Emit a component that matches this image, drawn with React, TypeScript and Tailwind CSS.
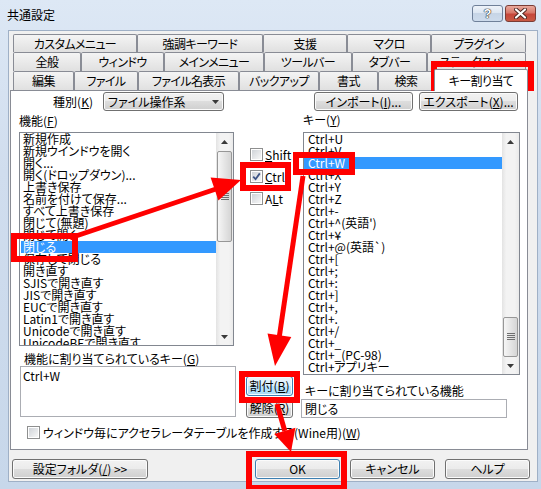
import React from "react";

const funcs = [
  "新規作成",
  "新規ウインドウを開く",
  "開く...",
  "開く(ドロップダウン)...",
  "上書き保存",
  "名前を付けて保存...",
  "すべて上書き保存",
  "閉じて(無題)",
  "閉じて開く",
  "閉じる",
  "保存して閉じる",
  "開き直す",
  "SJISで開き直す",
  "JISで開き直す",
  "EUCで開き直す",
  "Latin1で開き直す",
  "Unicodeで開き直す",
  "UnicodeBEで開き直す",
];

const keys = [
  "Ctrl+U",
  "Ctrl+V",
  "Ctrl+W",
  "Ctrl+X",
  "Ctrl+Y",
  "Ctrl+Z",
  "Ctrl+-",
  "Ctrl+^(英語')",
  "Ctrl+¥",
  "Ctrl+@(英語`)",
  "Ctrl+[",
  "Ctrl+;",
  "Ctrl+:",
  "Ctrl+]",
  "Ctrl+,",
  "Ctrl+.",
  "Ctrl+/",
  "Ctrl+_",
  "Ctrl+_(PC-98)",
  "Ctrl+アプリキー",
];

const BTN =
  "flex items-center justify-center rounded-[3px] border border-[#707070] bg-[linear-gradient(#f2f2f2_0%,#ebebeb_50%,#dddddd_50%,#cfcfcf_100%)] shadow-[inset_0_0_0_1px_#fbfbfb]";
const BTN_HOT =
  "flex items-center justify-center rounded-[3px] border border-[#3c7fb1] bg-[linear-gradient(#eaf6fd_0%,#d9f0fc_50%,#bee6fd_50%,#a7d9f5_100%)] shadow-[inset_0_0_0_1px_#f4fbff]";
const TAB =
  "h-[19px] flex items-center justify-center border border-b-0 border-[#898c95] rounded-t-[2px] bg-[linear-gradient(#f4f4f4,#e0e0e0)] whitespace-nowrap tracking-[-0.6px]";
const TAB1 =
  "h-[18px] flex items-center justify-center border border-b-0 border-[#898c95] rounded-t-[2px] bg-[linear-gradient(#f4f4f4,#e0e0e0)] whitespace-nowrap tracking-[-0.6px]";

function Tri({ down }: { down?: boolean }) {
  return (
    <svg width="7" height="4" viewBox="0 0 7 4">
      <path d={down ? "M0 0H7L3.5 4Z" : "M0 4H7L3.5 0Z"} fill="#3a3a3a" />
    </svg>
  );
}

function Grip() {
  return (
    <svg width="8" height="8" viewBox="0 0 8 8">
      <rect x="0" y="0" width="8" height="1" fill="#6f6f6f" />
      <rect x="0" y="2" width="8" height="1" fill="#6f6f6f" />
      <rect x="0" y="4" width="8" height="1" fill="#6f6f6f" />
      <rect x="0" y="6" width="8" height="1" fill="#6f6f6f" />
    </svg>
  );
}

function VScroll({ gapCls, thumbCls }: { gapCls: string; thumbCls: string }) {
  return (
    <div className="w-[17px] h-full flex flex-col shrink-0 bg-[linear-gradient(90deg,#e3e3e3,#f3f3f3_25%,#f3f3f3_75%,#eaeaea)]">
      <div className="h-[17px] flex items-center justify-center">
        <Tri />
      </div>
      <div className={gapCls} />
      <div
        className={
          "mx-[1px] rounded-[2px] border border-[#979797] bg-[linear-gradient(90deg,#f6f6f6,#e7e7e7_45%,#d5d5d5)] flex items-center justify-center " +
          thumbCls
        }
      >
        <Grip />
      </div>
      <div className="flex-1" />
      <div className="h-[17px] flex items-center justify-center">
        <Tri down />
      </div>
    </div>
  );
}

function Check({ checked }: { checked?: boolean }) {
  return (
    <div className="w-[13px] h-[13px] shrink-0 border border-[#8e8f8f] bg-white p-[1px]">
      <div className="w-full h-full bg-[linear-gradient(135deg,#cfd3d8,#f7f7f7)] flex items-center justify-center">
        {checked && (
          <svg width="9" height="9" viewBox="0 0 9 9">
            <path d="M1.2 4.6 L3.6 7.2 L7.8 1.4" stroke="#3d5485" strokeWidth="1.8" fill="none" />
          </svg>
        )}
      </div>
    </div>
  );
}

function Tabs() {
  return (
    <div className="ml-[4px] mt-[3px] flex flex-col">
      <div className="flex h-[18px]">
        <div className={TAB1 + " w-[124px]"}>カスタムメニュー</div>
        <div className={TAB1 + " w-[126px]"}>強調キーワード</div>
        <div className={TAB1 + " w-[84px]"}>支援</div>
        <div className={TAB1 + " w-[84px]"}>マクロ</div>
        <div className={TAB1 + " w-[95px]"}>プラグイン</div>
      </div>
      <div className="flex h-[19px]">
        <div className={TAB + " w-[68px]"}>全般</div>
        <div className={TAB + " w-[83px]"}>ウィンドウ</div>
        <div className={TAB + " w-[100px]"}>メインメニュー</div>
        <div className={TAB + " w-[88px]"}>ツールバー</div>
        <div className={TAB + " w-[75px]"}>タブバー</div>
        <div className={TAB + " w-[99px]"}>ステータスバー</div>
      </div>
      <div className="flex h-[19px] items-start">
        <div className={TAB + " w-[61px]"}>編集</div>
        <div className={TAB + " w-[64px]"}>ファイル</div>
        <div className={TAB + " w-[101px]"}>ファイル名表示</div>
        <div className={TAB + " w-[80px]"}>バックアップ</div>
        <div className={TAB + " w-[59px]"}>書式</div>
        <div className={TAB + " w-[56px]"}>検索</div>
        <div className="relative z-10 -mt-[2px] h-[22px] w-[94px] flex items-center justify-center border border-b-0 border-[#898c95] rounded-t-[2px] bg-white whitespace-nowrap tracking-[-0.6px]">
          キー割り当て
        </div>
      </div>
    </div>
  );
}

function Panel() {
  return (
    <div className="ml-[1px] w-[518px] h-[360px] border border-[#898c95] bg-white flex flex-col">
      {/* row A */}
      <div className="mt-[1px] h-[19px] flex items-center">
        <div className="w-[82px] text-right">
          種別(<u>K</u>)
        </div>
        <div className={BTN + " ml-[10px] w-[121px] h-[19px] !justify-between pl-[4px] pr-[4px]"}>
          <span>ファイル操作系</span>
          <Tri down />
        </div>
        <div className={BTN + " ml-[90px] w-[99px] h-[19px]"}>
          インポート(<u>I</u>)...
        </div>
        <div className={BTN + " ml-[6px] w-[99px] h-[19px]"}>
          エクスポート(<u>X</u>)...
        </div>
      </div>

      {/* columns */}
      <div className="flex">
        {/* left */}
        <div className="ml-[8px] w-[217px] flex flex-col">
          <div className="mt-[4px] h-[12px]">
            機能(<u>F</u>)
          </div>
          <div className="mt-[5px] w-[215px] h-[214px] border border-[#828790] bg-white flex overflow-hidden">
            <div className="flex-1 pl-[1px] overflow-hidden">
              {funcs.map((t) => (
                <div
                  key={t}
                  className={
                    t === "閉じる"
                      ? "h-[12px] leading-[12px] pl-[2px] whitespace-nowrap bg-[#3399ff] text-white"
                      : "h-[12px] leading-[12px] pl-[2px] whitespace-nowrap"
                  }
                >
                  {t}
                </div>
              ))}
            </div>
            <VScroll gapCls="h-[1px]" thumbCls="h-[91px]" />
          </div>
          <div className="mt-[7px] ml-[5px] h-[12px] whitespace-nowrap">
            機能に割り当てられているキー(<u>G</u>)
          </div>
          <div className="mt-[1px] ml-[1px] w-[216px] h-[51px] border border-[#abadb3] bg-white pl-[2px] pt-[3px]">
            Ctrl+W
          </div>
        </div>

        {/* middle */}
        <div className="ml-[10px] w-[47px] flex flex-col">
          <div className="mt-[37px] pl-[4px] flex flex-col gap-[9px]">
            <div className="h-[13px] flex items-center gap-[2px]">
              <Check />
              <span>
                <u>S</u>hift
              </span>
            </div>
            <div className="h-[13px] flex items-center gap-[2px]">
              <Check checked />
              <span>
                <u>C</u>trl
              </span>
            </div>
            <div className="h-[13px] flex items-center gap-[2px]">
              <Check />
              <span>
                A<u>L</u>t
              </span>
            </div>
          </div>
          <div className={BTN_HOT + " mt-[171px] w-[47px] h-[20px]"}>
            割付(<u>B</u>)
          </div>
          <div className={BTN + " mt-[2px] w-[47px] h-[20px]"}>
            解除(<u>R</u>)
          </div>
        </div>

        {/* right */}
        <div className="ml-[10px] w-[217px] flex flex-col">
          <div className="mt-[3px] h-[12px]">
            キー(<u>Y</u>)
          </div>
          <div className="mt-[6px] w-[217px] h-[243px] border border-[#828790] bg-white flex overflow-hidden">
            <div className="flex-1 overflow-hidden">
              {keys.map((t) => (
                <div
                  key={t}
                  className={
                    t === "Ctrl+W"
                      ? "h-[12px] leading-[12px] pl-[4px] whitespace-nowrap bg-[#3399ff] text-white"
                      : "h-[12px] leading-[12px] pl-[4px] whitespace-nowrap"
                  }
                >
                  {t}
                </div>
              ))}
            </div>
            <VScroll gapCls="h-[167px]" thumbCls="h-[40px]" />
          </div>
          <div className="mt-[10px] ml-[2px] h-[12px] whitespace-nowrap">キーに割り当てられている機能</div>
          <div className="mt-[2px] -ml-[2px] w-[206px] h-[19px] border border-[#abadb3] bg-white pl-[3px] flex items-center">
            閉じる
          </div>
        </div>
      </div>

      <div className="mt-[8px] ml-[16px] h-[13px] flex items-center gap-[3px] whitespace-nowrap">
        <Check />
        <span>
          ウィンドウ毎にアクセラレータテーブルを作成する(Wine用)(<u>W</u>)
        </span>
      </div>
    </div>
  );
}

function BottomButtons() {
  return (
    <div className="mt-[9px] pl-[3px] flex">
      <div className={BTN + " w-[136px] h-[20px]"}>
        設定フォルダ(<u>/</u>) &gt;&gt;
      </div>
      <div className={BTN + " ml-[107px] w-[85px] h-[20px] !border-[#3c7fb1]"}>OK</div>
      <div className={BTN + " ml-[10px] w-[85px] h-[20px]"}>キャンセル</div>
      <div className={BTN + " ml-[10px] w-[85px] h-[20px]"}>ヘルプ</div>
    </div>
  );
}

export default function App() {
  return (
    <div className="relative w-[541px] h-[489px] overflow-hidden bg-[linear-gradient(180deg,#dde8f5_0%,#d0ddee_35%,#c7d7ea_100%)] text-[12px] leading-[12px] text-black font-['Noto_Sans_CJK_JP',sans-serif] [font-feature-settings:'palt']">
      {/* title bar */}
      <div className="h-[30px] flex items-start">
        <div className="pl-[7px] pt-[8px] leading-[13px] text-[12px]">共通設定</div>
        <div className="ml-auto mr-[5px] mt-[5px] flex gap-[2px]">
          <div className="w-[31px] h-[17px] rounded-[3px] border border-[#6f8099] bg-[linear-gradient(#eef3f9_0%,#dbe5f1_50%,#c7d5e6_50%,#cddbec_100%)] flex items-center justify-center">
            <span className="font-['Liberation_Sans',sans-serif] font-bold text-[13px] leading-[13px] text-white [text-shadow:0_0_1px_#222,0_0_1px_#222,0_0_1px_#222]">
              ?
            </span>
          </div>
          <div className="w-[31px] h-[17px] rounded-[3px] border border-[#7a3d36] bg-[linear-gradient(#e9a99c_0%,#d8786a_45%,#c6463a_55%,#c95a44_100%)] flex items-center justify-center">
            <svg width="13" height="11" viewBox="0 0 13 11">
              <path d="M2 1.5 L11 9.5 M11 1.5 L2 9.5" stroke="#4a2420" strokeWidth="4" strokeLinecap="round" />
              <path d="M2 1.5 L11 9.5 M11 1.5 L2 9.5" stroke="#ffffff" strokeWidth="2.2" strokeLinecap="round" />
            </svg>
          </div>
        </div>
      </div>

      {/* body */}
      <div className="ml-[8px] w-[530px] h-[452px] bg-[#f0f0f0] border border-[#9fb0c6] flex flex-col">
        <Tabs />
        <Panel />
        <BottomButtons />
      </div>

      {/* annotations */}
      <div className="absolute left-[431px] top-[61px] w-[103px] h-[30px] border-[6px] border-[#ff0000]" />
      <div className="absolute left-[11px] top-[233px] w-[67px] h-[29px] border-[6px] border-[#ff0000]" />
      <div className="absolute left-[240px] top-[162px] w-[51px] h-[29px] border-[6px] border-[#ff0000]" />
      <div className="absolute left-[293px] top-[152px] w-[62px] h-[23px] border-[6px] border-[#ff0000]" />
      <div className="absolute left-[239px] top-[371px] w-[61px] h-[32px] border-[6px] border-[#ff0000]" />
      <div className="absolute left-[246px] top-[451px] w-[101px] h-[40px] border-[6px] border-[#ff0000]" />
      <svg className="absolute left-0 top-0 pointer-events-none" width="541" height="489" viewBox="0 0 541 489">
        <line x1="70" y1="238" x2="216" y2="189" stroke="#ff0000" strokeWidth="5" />
        <polygon points="241,180 218.4,200.4 210.6,177.6" fill="#ff0000" />
        <line x1="303" y1="176" x2="279.4" y2="336" stroke="#ff0000" strokeWidth="5" />
        <polygon points="275,366 291.3,337.1 267.5,333.5" fill="#ff0000" />
        <line x1="277" y1="404" x2="284.8" y2="431" stroke="#ff0000" strokeWidth="5" />
        <polygon points="291,452 295.4,427.8 274.2,434" fill="#ff0000" />
      </svg>
    </div>
  );
}
